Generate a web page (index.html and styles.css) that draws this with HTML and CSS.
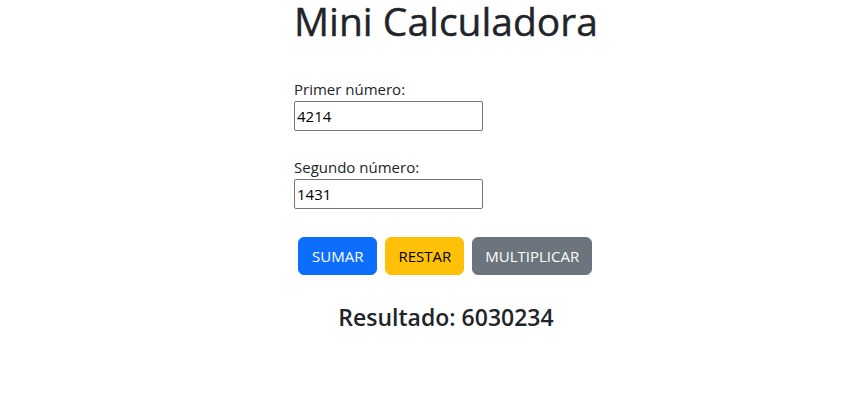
FILE: index.html
```html
<!DOCTYPE html>
<html lang="es">
<head>
<meta charset="utf-8">
<title>Mini Calculadora</title>
<link rel="stylesheet" href="styles.css">
</head>
<body>
<div class="page">
  <main class="calc">
    <h1 class="title">Mini Calculadora</h1>
    <label class="field-label" for="n1">Primer número:</label>
    <input class="field-input" id="n1" type="text" value="4214">
    <label class="field-label second" for="n2">Segundo número:</label>
    <input class="field-input" id="n2" type="text" value="1431">
    <div class="actions">
      <button class="btn btn-primary" type="button">SUMAR</button>
      <button class="btn btn-warning" type="button">RESTAR</button>
      <button class="btn btn-secondary" type="button">MULTIPLICAR</button>
    </div>
    <h4 class="result">Resultado: 6030234</h4>
  </main>
</div>
</body>
</html>
```
FILE: styles.css
```css
* { box-sizing: border-box; }
html, body { margin: 0; padding: 0; background: #fff; }
body {
  font-family: "Open Sans", "Noto Sans", sans-serif;
  font-size: 16px;
  line-height: 24px;
  color: #212529;
}
.page {
  display: flex;
  justify-content: center;
  padding-left: 30px;
}
.calc {
  width: 304px;
  display: flex;
  flex-direction: column;
  align-items: flex-start;
}
.title {
  margin: 0;
  font-size: 39px;
  line-height: 42px;
  font-weight: 500;
  white-space: nowrap;
  -webkit-text-stroke: 0.4px #212529;
}
.field-label {
  display: block;
  margin-top: 35px;
  font-size: 15px;
  line-height: 24px;
}
.field-label.second { margin-top: 24px; }
.field-input {
  display: block;
  width: 189px;
  height: 30px;
  margin: 0;
  padding: 0 2px;
  border: 1px solid #767676;
  border-radius: 2px;
  font-family: inherit;
  font-size: 15px;
  color: #000;
  background: #fff;
}
.actions {
  display: flex;
  width: 100%;
  margin-top: 24px;
}
.btn {
  margin: 4px;
  padding: 6px 12px;
  border: 1px solid transparent;
  border-radius: 6px;
  font-family: inherit;
  font-size: 15px;
  line-height: 24px;
  height: 38px;
}
.btn-primary { background: #0d6efd; border-color: #0d6efd; color: #fff; padding: 6px 13px; }
.btn-warning { background: #ffc107; border-color: #ffc107; color: #000; }
.btn-secondary { background: #6c757d; border-color: #6c757d; color: #fff; }
.result {
  align-self: center;
  margin: 24px 0 0;
  font-size: 23px;
  line-height: 29px;
  font-weight: 600;
}
```
